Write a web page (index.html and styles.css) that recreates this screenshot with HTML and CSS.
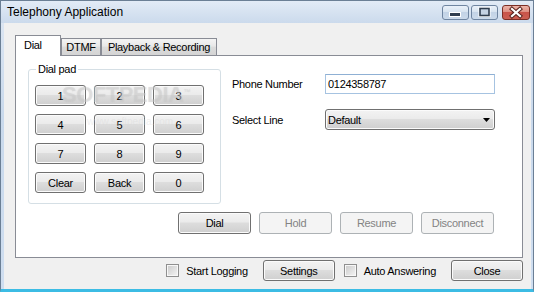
FILE: index.html
```html
<!DOCTYPE html>
<html lang="en">
<head>
  <meta charset="UTF-8">
  <title>Telephony Application</title>
  <link rel="stylesheet" href="styles.css">
</head>
<body>
  <div class="window">
    <div class="titlebar">
      <span class="title">Telephony Application</span>
      <div class="controls">
        <span class="ctl ctl-min">
          <svg width="27" height="15" viewBox="0 0 27 15"><rect x="7.5" y="7.5" width="11" height="4" fill="#2f3d4f" stroke="#fff"/></svg>
        </span>
        <span class="ctl ctl-max">
          <svg width="27" height="15" viewBox="0 0 27 15"><rect x="9" y="3.5" width="9" height="7" fill="none" stroke="#fff" stroke-width="3"/><rect x="9" y="3.5" width="9" height="7" fill="#c4d2e3" stroke="#2f3d4f" stroke-width="1.6"/></svg>
        </span>
        <span class="ctl ctl-close">
          <svg width="28" height="15" viewBox="0 0 28 15"><path d="M10 4 L18 11 M18 4 L10 11" stroke="#5a2420" stroke-width="4.2" stroke-linecap="square"/><path d="M10 4 L18 11 M18 4 L10 11" stroke="#fff" stroke-width="2.2" stroke-linecap="square"/></svg>
        </span>
      </div>
    </div>

    <div class="client">
      <div class="tabs">
        <div class="tab tab-active">Dial</div>
        <div class="tab tab-dtmf">DTMF</div>
        <div class="tab tab-play">Playback &amp; Recording</div>
      </div>

      <div class="panel">
        <div class="panel-top">
          <fieldset class="dialpad">
            <legend>Dial pad</legend>
            <div class="keys">
              <button class="btn">1</button>
              <button class="btn">2</button>
              <button class="btn">3</button>
              <button class="btn">4</button>
              <button class="btn">5</button>
              <button class="btn">6</button>
              <button class="btn">7</button>
              <button class="btn">8</button>
              <button class="btn">9</button>
              <button class="btn">Clear</button>
              <button class="btn">Back</button>
              <button class="btn">0</button>
            </div>
          </fieldset>

          <div class="form">
            <span class="form-label">Phone Number</span>
            <div class="textbox">0124358787</div>
            <span class="form-label">Select Line</span>
            <div class="combo">
              <span>Default</span>
              <svg width="7" height="4" viewBox="0 0 7 4"><polygon points="0,0 7,0 3.5,4" fill="#000"/></svg>
            </div>
          </div>
        </div>

        <div class="actions">
          <button class="btn btn-action">Dial</button>
          <button class="btn btn-action" disabled>Hold</button>
          <button class="btn btn-action" disabled>Resume</button>
          <button class="btn btn-action" disabled>Disconnect</button>
        </div>

        <span class="wm-big">SOFTPEDIA<sup>™</sup></span>
        <span class="wm-small">www.softpedia.com</span>
      </div>

      <div class="footer">
        <label class="check"><input type="checkbox"> Start Logging</label>
        <button class="btn btn-foot">Settings</button>
        <label class="check check-auto"><input type="checkbox"> Auto Answering</label>
        <button class="btn btn-foot">Close</button>
      </div>
    </div>
  </div>
</body>
</html>
```

FILE: styles.css
```css
body {
  margin: 0;
  font-family: "Liberation Sans", Arial, sans-serif;
  font-size: 11px;
  letter-spacing: -0.3px;
  color: #000;
  overflow: hidden;
}

.window {
  width: 534px;
  height: 292px;
  box-sizing: border-box;
  border: 1px solid #6b7f95;
  border-bottom: 3px solid #3cbce4;
  padding: 0 2px 0 3px;
  background: linear-gradient(#dfe8f4, #c9d9ec 40%, #cfdef0);
}

.titlebar {
  height: 22px;
  margin: 0 -2px 0 -3px;
  padding: 0 3px 0 6px;
  display: flex;
  justify-content: space-between;
  align-items: flex-start;
  background: linear-gradient(#e2ebf6, #cbdaec);
}

.title {
  font-size: 12px;
  letter-spacing: 0;
  line-height: 23px;
}

.controls {
  display: flex;
  margin-top: 4px;
}

.ctl {
  display: block;
  width: 27px;
  height: 15px;
  box-sizing: border-box;
  border: 1px solid #6f85a1;
  border-radius: 3px;
  background: linear-gradient(#eaf1f9 0%, #d7e3f0 45%, #c3d3e6 50%, #cbdaeb 100%);
  overflow: hidden;
}

.ctl svg {
  display: block;
  margin: -1px 0 0 -1px;
}

.ctl-max {
  margin-left: 2px;
}

.ctl-close {
  width: 28px;
  margin-left: 4px;
  border-color: #7b2e25;
  background: linear-gradient(#ecb4a9 0%, #de8f82 45%, #c9544a 50%, #cc5e52 100%);
}

.client {
  height: 266px;
  box-sizing: border-box;
  padding: 12px 8px 0 11px;
  background: #f0f0f0;
}

.tabs {
  display: flex;
  align-items: flex-end;
  height: 21px;
  margin-bottom: -1px;
  position: relative;
  z-index: 1;
}

.tab {
  height: 17px;
  box-sizing: border-box;
  margin-bottom: 1px;
  border: 1px solid #898c95;
  border-bottom: none;
  line-height: 16px;
  text-align: center;
  background: linear-gradient(#f4f4f4, #e8e8e8 45%, #dcdcdc 50%, #d4d4d4);
}

.tab-active {
  width: 46px;
  height: 21px;
  margin-bottom: 0;
  line-height: 18px;
  text-align: left;
  padding-left: 8px;
  background: #fff;
}

.tab-dtmf {
  width: 40px;
}

.tab-play {
  width: 116px;
}

.panel {
  height: 203px;
  box-sizing: border-box;
  border: 1px solid #898c95;
  background: #fff;
  padding: 7px 0 0 12px;
  position: relative;
}

.panel-top {
  display: flex;
  align-items: flex-start;
}

.dialpad {
  width: 193px;
  box-sizing: border-box;
  margin: 0;
  padding: 0 16px 10px 6px;
  border: 1px solid #d5dfe5;
  border-radius: 3px;
}

.dialpad legend {
  padding: 0 2px;
  margin-left: 1px;
  line-height: 13px;
}

.keys {
  display: grid;
  grid-template-columns: repeat(3, 51px);
  grid-auto-rows: 21px;
  gap: 8px;
  margin-top: 9px;
}

.btn {
  font-family: "Liberation Sans", Arial, sans-serif;
  font-size: 11px;
  letter-spacing: -0.3px;
  color: #000;
  height: 21px;
  padding: 0;
  border: 1px solid #707070;
  border-radius: 3px;
  background: linear-gradient(#f3f3f3 0%, #ebebeb 45%, #dddddd 50%, #cfcfcf 100%);
  box-shadow: inset 0 0 0 1px #fbfbfb;
}

.btn:disabled {
  color: #838383;
  border-color: #adb2b5;
  background: #f4f4f4;
  box-shadow: none;
}

.form {
  display: grid;
  grid-template-columns: 93px 170px;
  grid-template-rows: 20px 21px;
  row-gap: 15px;
  align-items: center;
  margin: 11px 0 0 11px;
}

.textbox {
  height: 20px;
  box-sizing: border-box;
  border: 1px solid #a6c3e1;
  border-top-color: #8fb0d4;
  padding-left: 2px;
  line-height: 18px;
}

.combo {
  height: 21px;
  box-sizing: border-box;
  border: 1px solid #707070;
  border-radius: 3px;
  padding: 0 4px 0 2px;
  display: flex;
  justify-content: space-between;
  align-items: center;
  background: linear-gradient(#f3f3f3 0%, #ebebeb 45%, #dddddd 50%, #cfcfcf 100%);
  box-shadow: inset 0 0 0 1px #fbfbfb;
}

.actions {
  display: flex;
  justify-content: flex-end;
  gap: 8px;
  margin-top: 8px;
  padding-right: 28px;
}

.btn-action {
  width: 73px;
  height: 22px;
}

/* faint watermark over the dial pad */
.wm-big,
.wm-small {
  position: absolute;
  pointer-events: none;
  color: rgba(215, 215, 215, 0.4);
  letter-spacing: 0;
}

.wm-big {
  left: 46px;
  top: 26px;
  font-size: 22px;
  font-weight: bold;
  letter-spacing: -0.5px;
  text-shadow: 0 0 1px rgba(160, 160, 160, 0.3);
}

.wm-big sup {
  font-size: 7px;
  font-weight: normal;
}

.wm-small {
  left: 71px;
  top: 60px;
  font-size: 10px;
}

.footer {
  display: flex;
  align-items: center;
  justify-content: flex-end;
  margin-top: 2px;
}

.check {
  display: flex;
  align-items: center;
  gap: 7px;
  margin-right: 15px;
}

.check-auto {
  margin-left: 9px;
}

.check input {
  appearance: none;
  width: 13px;
  height: 13px;
  margin: 0;
  border: 1px solid #8f8f8f;
  background: linear-gradient(135deg, #c9c9c9, #f5f5f5);
  box-shadow: inset 0 0 0 1px #f7f7f7;
}

.btn-foot {
  width: 72px;
}
```
